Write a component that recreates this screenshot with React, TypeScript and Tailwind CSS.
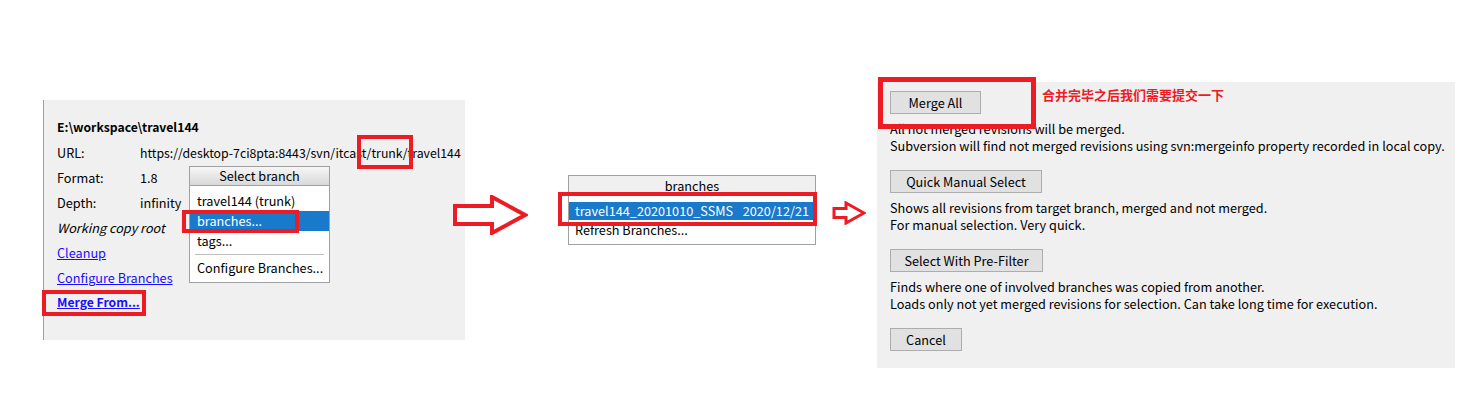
import React from "react";

const FONT = { fontFamily: '"Noto Sans CJK SC", "Noto Sans", sans-serif' };

// annotation box drawn over the screenshot
function RedBox({ className }: { className: string }) {
  return <div className={"pointer-events-none absolute border-4 border-[#ed1c24] " + className} />;
}

function InfoRow({ label, children }: { label: string; children: React.ReactNode }) {
  return (
    <div className="flex h-[25px] items-center">
      <span className="w-[83px] shrink-0">{label}</span>
      <span>{children}</span>
    </div>
  );
}

function WorkingCopyPanel() {
  return (
    <div className="relative h-[240px] w-[422px] shrink-0 whitespace-nowrap border-l border-[#a0a0a0] bg-[#f0f0f0] pl-[13px] pt-[15px] text-[12.7px] text-black">
      <div className="flex h-[25px] items-center text-[12.2px] font-bold">E:\workspace\travel144</div>
      <InfoRow label="URL:">
        <span className="text-[12.3px]">https://desktop-7ci8pta:8443/svn/itcast/trunk/travel144</span>
      </InfoRow>
      <InfoRow label="Format:">1.8</InfoRow>
      <InfoRow label="Depth:">infinity</InfoRow>
      <div className="flex h-[25px] items-center italic">Working copy root</div>
      <div className="flex h-[25px] items-center">
        <span className="text-[#1a0dff] underline">Cleanup</span>
      </div>
      <div className="flex h-[25px] items-center">
        <span className="text-[#1a0dff] underline">Configure Branches</span>
      </div>
      <div className="flex h-[25px] items-center">
        <span className="text-[12.2px] font-bold text-[#1a0dff] underline">Merge From...</span>
      </div>

      {/* Select branch menu */}
      <div className="absolute left-[145px] top-[66px] w-[141px] border border-[#a0a0a0] bg-white pb-[4px]">
        <div className="flex h-[19px] items-center justify-center border-b border-[#a0a0a0] bg-gradient-to-b from-[#f6f6f6] to-[#d9d9d9]">
          Select branch
        </div>
        <div className="pt-[5px]">
          <div className="flex h-[20px] items-center px-[7px]">travel144 (trunk)</div>
          <div className="flex h-[20px] items-center bg-[#1979ca] px-[7px] text-white">branches...</div>
          <div className="flex h-[20px] items-center px-[7px]">tags...</div>
          <div className="mx-[5px] my-[3px] h-px bg-[#c0c0c0]" />
          <div className="flex h-[20px] items-center px-[7px]">Configure Branches...</div>
        </div>
      </div>

      <RedBox className="left-[313px] top-[35px] h-[34px] w-[56px]" />
      <RedBox className="left-[138px] top-[110px] h-[23px] w-[117px]" />
      <RedBox className="left-[-2px] top-[190px] h-[26px] w-[104px]" />
    </div>
  );
}

function BranchesPopup() {
  return (
    <div className="relative w-[248px] shrink-0 whitespace-nowrap border border-[#a0a0a0] bg-white pb-[4px] text-[12.7px] text-black">
      <div className="flex h-[19px] items-center justify-center bg-[#f0f0f0]">branches</div>
      <div className="pt-[7px]">
        <div className="flex h-[18px] items-center justify-between bg-[#1979ca] pl-[6px] pr-[6px] text-white">
          <span>travel144_20201010_SSMS</span>
          <span>2020/12/21</span>
        </div>
        <div className="flex h-[20px] items-center px-[6px]">Refresh Branches...</div>
      </div>
      <RedBox className="left-[-11px] top-[16px] h-[34px] w-[259px]" />
    </div>
  );
}

function Btn({ label, w }: { label: string; w: string }) {
  return (
    <div className={"flex h-[23px] items-center justify-center border border-[#adadad] bg-[#e1e1e1] " + w}>
      {label}
    </div>
  );
}

function MergeOptionsPanel() {
  return (
    <div className="relative h-[286px] w-[578px] shrink-0 whitespace-nowrap bg-[#f0f0f0] pl-[13px] pt-[9px] text-[12.7px] leading-[17px] text-black">
      <Btn label="Merge All" w="w-[91px]" />
      <div className="mt-[6px]">
        <div>All not merged revisions will be merged.</div>
        <div>Subversion will find not merged revisions using svn:mergeinfo property recorded in local copy.</div>
      </div>
      <div className="mt-[16px]">
        <Btn label="Quick Manual Select" w="w-[152px]" />
      </div>
      <div className="mt-[6px]">
        <div>Shows all revisions from target branch, merged and not merged.</div>
        <div>For manual selection. Very quick.</div>
      </div>
      <div className="mt-[16px]">
        <Btn label="Select With Pre-Filter" w="w-[153px]" />
      </div>
      <div className="mt-[6px]">
        <div>Finds where one of involved branches was copied from another.</div>
        <div>Loads only not yet merged revisions for selection. Can take long time for execution.</div>
      </div>
      <div className="mt-[16px]">
        <Btn label="Cancel" w="w-[72px]" />
      </div>

      <RedBox className="left-[1px] top-[-5px] h-[52px] w-[158px] border-[5px]" />
      <div className="absolute left-[165px] top-[4px] text-[13px] font-bold text-[#ed1c24]">合并完毕之后我们需要提交一下</div>
    </div>
  );
}

export default function App() {
  return (
    <div className="flex h-[403px] w-[1466px] items-start overflow-hidden bg-white" style={FONT}>
      <div className="ml-[43px] mt-[100px]">
        <WorkingCopyPanel />
      </div>
      <svg className="relative ml-[-12px] mt-[195px] shrink-0" width="75" height="40" viewBox="0 0 75 40">
        <polygon points="2,11 39,11 39,2 72,20 39,38 39,29 2,29" fill="white" stroke="#ed1c24" strokeWidth="4" />
      </svg>
      <div className="ml-[40px] mt-[175px]">
        <BranchesPopup />
      </div>
      <svg className="relative ml-[16px] mt-[201px] shrink-0" width="34" height="24" viewBox="0 0 34 24">
        <polygon points="2,7.5 14,7.5 14,2 32,12 14,22 14,16.5 2,16.5" fill="white" stroke="#ed1c24" strokeWidth="3" />
      </svg>
      <div className="ml-[11px] mt-[82px]">
        <MergeOptionsPanel />
      </div>
    </div>
  );
}
